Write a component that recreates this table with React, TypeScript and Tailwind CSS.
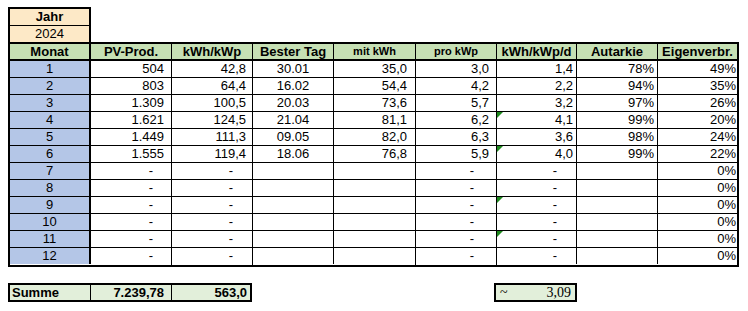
import React from 'react';

type Row = {
  m: number;
  pv: string;
  kwp: string;
  tag: string;
  mit: string;
  pro: string;
  d: string;
  aut: string;
  eig: string;
  flag?: boolean;
};

const rows: Row[] = [
  { m: 1, pv: '504', kwp: '42,8', tag: '30.01', mit: '35,0', pro: '3,0', d: '1,4', aut: '78%', eig: '49%' },
  { m: 2, pv: '803', kwp: '64,4', tag: '16.02', mit: '54,4', pro: '4,2', d: '2,2', aut: '94%', eig: '35%' },
  { m: 3, pv: '1.309', kwp: '100,5', tag: '20.03', mit: '73,6', pro: '5,7', d: '3,2', aut: '97%', eig: '26%' },
  { m: 4, pv: '1.621', kwp: '124,5', tag: '21.04', mit: '81,1', pro: '6,2', d: '4,1', aut: '99%', eig: '20%', flag: true },
  { m: 5, pv: '1.449', kwp: '111,3', tag: '09.05', mit: '82,0', pro: '6,3', d: '3,6', aut: '98%', eig: '24%' },
  { m: 6, pv: '1.555', kwp: '119,4', tag: '18.06', mit: '76,8', pro: '5,9', d: '4,0', aut: '99%', eig: '22%', flag: true },
  { m: 7, pv: '-', kwp: '-', tag: '', mit: '', pro: '-', d: '-', aut: '', eig: '0%' },
  { m: 8, pv: '-', kwp: '-', tag: '', mit: '', pro: '-', d: '-', aut: '', eig: '0%' },
  { m: 9, pv: '-', kwp: '-', tag: '', mit: '', pro: '-', d: '-', aut: '', eig: '0%', flag: true },
  { m: 10, pv: '-', kwp: '-', tag: '', mit: '', pro: '-', d: '-', aut: '', eig: '0%' },
  { m: 11, pv: '-', kwp: '-', tag: '', mit: '', pro: '-', d: '-', aut: '', eig: '0%', flag: true },
  { m: 12, pv: '-', kwp: '-', tag: '', mit: '', pro: '-', d: '-', aut: '', eig: '0%' },
];

const cols = 'grid grid-cols-[81px_81px_81px_81px_82px_81px_80px_81px_79px]';

const Num = ({ v, pr, dashPr, last }: { v: string; pr: string; dashPr: string; last?: boolean }) => (
  <div className={`h-[17px] ${last ? 'h-[16px]' : 'border-b'} border-r border-black text-right leading-[16px] ${v === '-' ? dashPr : pr}`}>
    {v}
  </div>
);

export default function App() {
  return (
    <div className="w-[748px] h-[311px] bg-white text-black text-[13px] font-['Liberation_Sans',Arial,sans-serif] pt-[7px] pl-[8px]">
      {/* Jahr */}
      <div className="w-[83px] border-2 border-b-0 border-black bg-[#fde9c7] text-center">
        <div className="h-[17px] border-b border-black font-bold leading-[16px]">Jahr</div>
        <div className="h-[16px] leading-[16px]">2024</div>
      </div>

      {/* Monatstabelle */}
      <div className={`${cols} w-[731px] border-2 border-black`}>
        <div className="h-[17px] border-r-2 border-b-2 border-black bg-[#c6e0b4] font-bold text-center leading-[15px]">Monat</div>
        <div className="h-[17px] border-r border-b-2 border-black bg-[#c6e0b4] font-bold text-center leading-[15px]">PV-Prod.</div>
        <div className="h-[17px] border-r border-b-2 border-black bg-[#c6e0b4] font-bold text-center leading-[15px]">kWh/kWp</div>
        <div className="h-[17px] border-r border-b-2 border-black bg-[#c6e0b4] font-bold text-center leading-[15px]">Bester Tag</div>
        <div className="h-[17px] border-r border-b-2 border-black bg-[#c6e0b4] font-bold text-center text-[11px] leading-[15px]">mit kWh</div>
        <div className="h-[17px] border-r border-b-2 border-black bg-[#c6e0b4] font-bold text-center text-[11px] leading-[15px]">pro kWp</div>
        <div className="h-[17px] border-r border-b-2 border-black bg-[#c6e0b4] font-bold text-center leading-[15px]">kWh/kWp/d</div>
        <div className="h-[17px] border-r border-b-2 border-black bg-[#c6e0b4] font-bold text-center leading-[15px]">Autarkie</div>
        <div className="h-[17px] border-b-2 border-black bg-[#c6e0b4] font-bold text-center leading-[15px]">Eigenverbr.</div>

        {rows.map((r, i) => {
          const last = i === rows.length - 1;
          const bb = last ? 'h-[16px]' : 'h-[17px] border-b';
          return (
            <React.Fragment key={r.m}>
              <div className={`${bb} border-r-2 border-black bg-[#b4c6e7] text-center leading-[16px]`}>{r.m}</div>
              <Num v={r.pv} pr="pr-[7px]" dashPr="pr-[18px]" last={last} />
              <Num v={r.kwp} pr="pr-[6px]" dashPr="pr-[19px]" last={last} />
              <div className={`${bb} border-r border-black text-center leading-[16px]`}>{r.tag}</div>
              <Num v={r.mit} pr="pr-[8px]" dashPr="pr-[18px]" last={last} />
              <Num v={r.pro} pr="pr-[7px]" dashPr="pr-[22px]" last={last} />
              <div className={`relative ${bb} border-r border-black text-right leading-[16px] ${r.d === '-' ? 'pr-[19px]' : 'pr-[3px]'}`}>
                {r.flag && (
                  <span className="absolute left-0 top-0 w-0 h-0 border-t-[6px] border-t-[#1e8a1e] border-r-[6px] border-r-transparent" />
                )}
                {r.d}
              </div>
              <div className={`${bb} border-r border-black text-right pr-[3px] leading-[16px]`}>{r.aut}</div>
              <div className={`${bb} border-black text-right pr-[1px] leading-[16px]`}>{r.eig}</div>
            </React.Fragment>
          );
        })}
      </div>

      {/* Summen */}
      <div className="flex mt-[16px]">
        <div className="grid grid-cols-[81px_81px_78px] w-[244px] border-2 border-black bg-[#e2efda] font-bold">
          <div className="h-[15px] border-r border-black pl-[2px] leading-[15px]">Summe</div>
          <div className="h-[15px] border-r border-black text-right pr-[7px] leading-[15px]">7.239,78</div>
          <div className="h-[15px] text-right pr-[3px] leading-[15px]">563,0</div>
        </div>
        <div className="ml-[242px] w-[83px] border-2 border-black bg-[#e2efda] flex justify-between px-[4px] h-[19px] font-['Liberation_Serif','Times_New_Roman',serif] text-[14px] leading-[15px]">
          <span>~</span>
          <span>3,09</span>
        </div>
      </div>
    </div>
  );
}
